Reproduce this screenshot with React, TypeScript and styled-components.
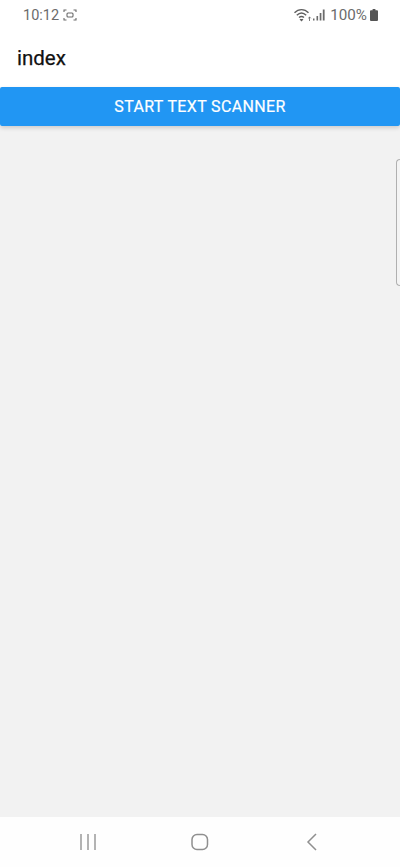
import styled, { createGlobalStyle } from "styled-components";

const GlobalStyle = createGlobalStyle`
  html, body {
    margin: 0;
    padding: 0;
    background: #fff;
  }
  * {
    box-sizing: border-box;
  }
`;

const Screen = styled.div`
  position: relative;
  width: 400px;
  height: 867px;
  display: flex;
  flex-direction: column;
  overflow: hidden;
  background: #fff;
  font-family: Roboto, "Liberation Sans", sans-serif;
`;

const StatusBar = styled.div`
  height: 32px;
  flex: none;
  display: flex;
  align-items: center;
  justify-content: space-between;
  padding: 0 22px 2px 23px;
  color: #6b6b6b;
`;

const StatusGroup = styled.div`
  display: flex;
  align-items: center;
`;

const Clock = styled.span`
  font-size: 14.5px;
  margin-right: 4px;
`;

const Battery = styled.span`
  font-size: 15.2px;
  margin: 0 3px 0 5px;
`;

const Header = styled.div`
  height: 55px;
  flex: none;
  display: flex;
  align-items: center;
  padding: 0 0 3px 17px;
  font-size: 20.5px;
  font-weight: 400;
  -webkit-text-stroke: 0.25px #111;
  color: #111;
`;

const ScanButton = styled.button`
  height: 39px;
  flex: none;
  width: 100%;
  padding: 0;
  border: 0;
  border-radius: 2px;
  background: #2196f3;
  color: #fff;
  font-family: inherit;
  font-size: 16px;
  font-weight: 400;
  letter-spacing: 0.35px;
  -webkit-text-stroke: 0.2px #fff;
  box-shadow: 0 2px 4px rgba(0, 0, 0, 0.16);
  position: relative;
`;

const Content = styled.div`
  flex: 1;
  background: #f2f2f2;
`;

const NavBar = styled.div`
  height: 50px;
  flex: none;
  background: #fefefe;
  display: grid;
  grid-template-columns: 1fr 1fr 1fr;
  padding: 0 32px;
  align-items: center;
  justify-items: center;
`;

const EdgeHandle = styled.div`
  position: absolute;
  top: 159px;
  right: 0;
  width: 4px;
  height: 127px;
  background: #f4f4f4;
  border: 1px solid #b0b0b0;
  border-right: 0;
  border-radius: 4px 0 0 4px;
`;

const CaptureIcon = () => (
  <svg width="14" height="12" viewBox="0 0 14 12" fill="none" stroke="#6b6b6b" strokeWidth="1.1">
    <path d="M1 3V1h2.5M10.5 1H13v2M13 9v2h-2.5M3.5 11H1V9" />
    <rect x="4" y="4" width="6" height="4" rx="1" />
  </svg>
);

const WifiIcon = () => (
  <svg width="18" height="14" viewBox="0 0 18 14" fill="none" stroke="#5f5f5f" strokeWidth="1.4">
    <path d="M0.500 4.800C4.500 0.600 10.500 0.600 14.500 4.800" />
    <path d="M2.800 7.300C5.800 4.300 9.200 4.300 12.200 7.300" />
    <path d="M5 9.600C6.600 8.100 8.400 8.100 10 9.600" />
    <path d="M7.500 11v1.500M6 11.200l1.500 1.500 1.500-1.500" strokeWidth="1.1" />
    <path d="M15.500 13V9M14.200 10.300l1.300-1.300 1.300 1.300" strokeWidth="0.8" />
  </svg>
);

const SignalIcon = () => (
  <svg width="13" height="12" viewBox="0 0 13 12" fill="#6b6b6b">
    <rect x="1" y="9.500" width="1.500" height="2" />
    <rect x="4.500" y="7" width="1.600" height="4.500" />
    <rect x="7.700" y="4" width="1.700" height="7.500" />
    <rect x="10.800" y="0.500" width="1.800" height="11" />
  </svg>
);

const BatteryIcon = () => (
  <svg width="8" height="12" viewBox="0 0 8 12" fill="#555">
    <path d="M2.600 0h2.800v1.200H7a1 1 0 0 1 1 1V11a1 1 0 0 1-1 1H1a1 1 0 0 1-1-1V2.200a1 1 0 0 1 1-1h1.600z" />
  </svg>
);

const RecentsIcon = () => (
  <svg width="18" height="16" viewBox="0 0 18 16" fill="none" stroke="#9a9a9a" strokeWidth="1.5">
    <path d="M2 0v16M9 0v16M16 0v16" />
  </svg>
);

const HomeIcon = () => (
  <svg width="18" height="18" viewBox="0 0 18 18" fill="none" stroke="#8f8f8f" strokeWidth="1.5">
    <rect x="1" y="1.500" width="15.500" height="15" rx="5" />
  </svg>
);

const BackIcon = () => (
  <svg width="12" height="18" viewBox="0 0 12 18" fill="none" stroke="#8f8f8f" strokeWidth="1.5">
    <path d="M10 1L2 9l8 8" />
  </svg>
);

export default function App() {
  return (
    <>
      <GlobalStyle />
      <Screen>
        <StatusBar>
          <StatusGroup>
            <Clock>10:12</Clock>
            <CaptureIcon />
          </StatusGroup>
          <StatusGroup>
            <WifiIcon />
            <SignalIcon />
            <Battery>100%</Battery>
            <BatteryIcon />
          </StatusGroup>
        </StatusBar>
        <Header>index</Header>
        <ScanButton>START TEXT SCANNER</ScanButton>
        <Content />
        <NavBar>
          <RecentsIcon />
          <HomeIcon />
          <BackIcon />
        </NavBar>
        <EdgeHandle />
      </Screen>
    </>
  );
}
